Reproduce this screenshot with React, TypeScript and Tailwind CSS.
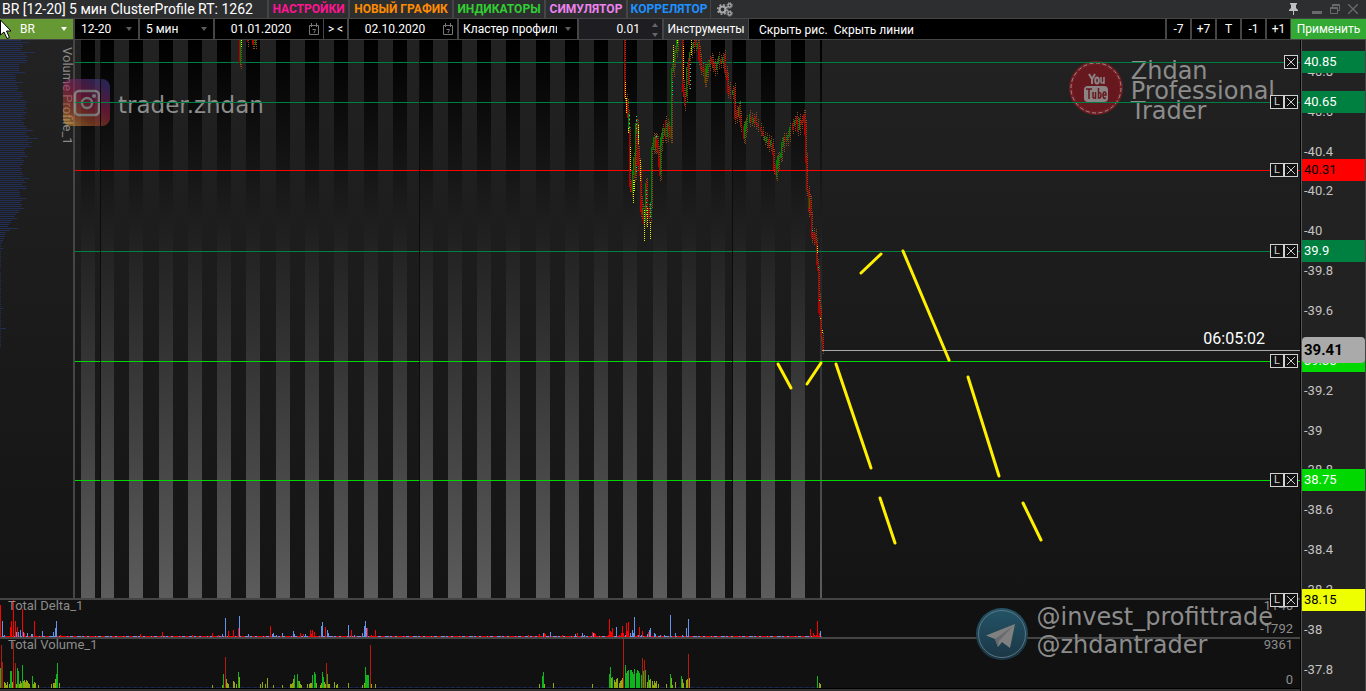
import React from 'react';

type Bar = [number, number, string];

const COLORS: Record<string, string> = {
  r: '#ff0000',
  b: '#6495ed',
  g: '#0fb41e',
  o: '#93a80e',
  d: '#b31b0b',
};

// Price axis: 199.2 px per 1.00, 40.85 is 22px under the top of the pane
const priceToY = (price: number) => Math.round(22 + (40.85 - price) * 199.2);

// "x,height,colour" separated by spaces
const parseBars = (text: string): Bar[] =>
  text.split(' ').map(item => {
    const [x, h, c] = item.split(',');
    return [Number(x), Number(h), COLORS[c]];
  });

const DELTA_BARS = parseBars(
  '0,32,r 2,16,b 4,2,b 10,10,r 11,16,r 13,37,r 15,16,r 16,5,b 17,10,r 18,5,b 20,7,b 22,28,r 23,5,b 24,4,r 27,4,b 31,3,b 32,3,b 34,16,r 42,6,b 53,5,b 55,9,b 56,16,b 60,2,r 140,3,r 162,5,r 192,2,r 212,4,r 218,2,r 222,3,b 225,19,b 228,6,r 233,7,r 238,9,r 239,21,b 248,3,b 270,11,r 272,3,b 273,4,b 276,2,b 282,4,b 293,6,b 294,3,b 300,4,r 303,3,r 305,3,b 310,7,r 311,3,r 312,7,r 314,5,r 321,11,b 322,15,b 325,10,r 327,7,b 328,4,b 348,12,b 351,7,r 354,2,b 362,4,b 364,11,b 365,16,b 366,9,b 367,9,r 371,2,r 375,7,r 528,2,r 539,3,r 543,4,b 544,4,r 545,3,r 550,5,b 562,2,r 575,3,b 577,4,r 582,4,b 584,2,b 592,5,r 593,4,b 594,4,r 595,3,r 608,2,r 609,18,r 610,6,r 611,5,r 612,9,r 616,10,b 619,2,r 620,1,r 621,4,r 622,11,r 623,4,r 625,2,b 626,14,r 627,6,r 628,15,r 630,4,b 632,7,b 633,4,b 634,20,b 637,2,r 638,2,b 639,10,r 641,2,b 642,6,r 647,3,b 648,5,r 649,7,b 650,9,b 654,4,b 655,3,b 660,2,b 664,2,b 670,22,b 675,4,b 682,2,b 686,9,b 688,18,b 810,8,r 813,4,r 814,2,r 815,1,r 816,2,r 817,16,r 819,4,r 820,6,b'
);

const VOLUME_BARS = parseBars(
  '0,20,g 1,43,d 2,26,d 4,6,o 5,5,o 6,3,o 7,6,o 9,4,o 10,17,g 11,17,g 12,6,o 13,46,d 15,25,d 16,4,o 17,20,g 18,17,g 19,4,o 20,7,o 21,5,o 22,23,g 23,7,o 24,8,o 25,6,o 26,8,o 27,7,o 28,5,o 29,4,o 32,12,g 33,4,o 34,6,o 35,5,o 38,3,o 51,4,o 53,5,o 54,5,o 55,9,o 56,14,g 57,25,g 59,5,o 212,3,o 222,3,o 223,14,g 225,31,d 226,9,o 227,5,o 228,4,o 233,7,o 234,6,o 236,4,o 238,16,g 239,11,o 260,4,o 262,6,o 265,4,o 267,10,o 273,3,o 282,3,o 290,4,o 291,4,o 292,5,o 293,9,o 294,13,g 297,14,g 298,7,g 299,7,o 300,4,o 301,3,o 307,4,o 309,4,o 310,5,o 311,5,o 312,13,g 314,16,g 315,14,g 316,5,o 320,3,o 321,5,o 322,16,g 323,11,g 324,6,o 325,4,o 326,25,d 327,14,g 328,4,o 329,4,o 334,6,o 336,3,o 337,4,o 348,5,o 362,3,o 364,5,o 365,21,g 366,13,g 367,13,g 368,13,g 370,43,d 371,4,o 375,4,o 539,4,o 542,12,g 543,16,g 544,4,o 553,5,o 592,4,o 609,14,g 610,21,g 611,10,o 612,11,g 614,8,o 615,6,o 616,9,o 617,10,o 619,5,o 620,7,o 621,8,o 622,10,o 623,49,d 625,23,g 626,15,g 627,17,g 628,18,g 630,18,g 631,18,g 632,16,g 633,14,g 634,19,g 636,15,g 637,18,g 638,17,g 639,15,g 641,13,g 642,30,d 643,17,g 644,28,d 645,18,g 647,6,o 648,13,g 649,8,o 650,9,o 652,7,o 653,3,o 654,7,o 655,5,o 656,7,o 658,4,o 666,4,o 670,14,g 671,10,o 672,3,o 675,6,o 681,12,g 682,9,o 683,5,o 686,8,o 687,9,o 688,34,d 689,10,o 817,12,g 819,5,o 820,4,o'
);

// Horizontal volume profile, one row every 2px
const PROFILE = [
  21, 29, 23, 23, 22, 21, 35, 25, 28, 26, 28, 26, 19, 19, 19, 19, 25, 15, 16, 16, 16, 23, 16, 18, 19, 17, 23, 22, 23, 20,
  25, 27, 26, 25, 27, 24, 27, 25, 23, 25, 22, 24, 24, 26, 27, 33, 27, 26, 29, 38, 28, 32, 29, 31, 26, 24, 25, 25, 28, 22, 24,
  23, 23, 20, 22, 21, 22, 23, 23, 29, 24, 26, 22, 26, 27, 19, 20, 20, 20, 26, 22, 20, 22, 21, 24, 19, 19, 16, 14, 17, 12, 11,
  9, 8, 18, 10, 6, 5, 5, 4, 3, 2, 1, 1, 3, 1, 1, 1, 1, 1, 1, 1, 1, 1, 1, 0, 1, 1, 1, 1, 1, 1, 1, 1, 1, 1, 1, 1, 1, 1, 1, 1,
  1, 1, 3, 1, 1, 1, 1, 1, 1, 1, 1, 1, 6, 1, 1, 1, 1, 1, 1, 1, 1, 1,
];

// Session stripes: [x, width]
const STRIPES = [
  [81, 14], [101, 13], [129, 14], [159, 14], [188, 14], [217, 14], [246, 14], [276, 14], [305, 14], [334, 14],
  [364, 14], [393, 14], [420, 13], [448, 14], [477, 14], [506, 14], [536, 14], [565, 14], [594, 14], [623, 14],
  [653, 14], [682, 14], [711, 14], [733, 13], [761, 14], [791, 14],
];

// "x,top,bottom,colour" for every cluster candle
const CANDLES =
  '239,0,23,r 240,0,24,g 247,0,2,r 252,0,5,r 253,0,5,r 255,0,5,g 624,0,58,r 626,58,72,r 627,63,78,r 628,74,92,g 629,91,147,r 631,140,152,r 632,130,153,g 633,117,134,g 634,117,137,r 635,83,136,g 636,83,94,g 637,84,126,r 638,110,125,r 639,122,136,r 640,130,172,r 641,160,175,r 642,168,175,g 643,170,184,r 645,143,182,g 646,142,178,r 648,168,178,r 650,162,178,g 651,107,163,g 653,97,110,g 654,98,108,r 655,97,110,g 656,98,108,r 657,100,112,r 658,110,127,r 659,118,136,r 660,97,135,g 661,94,106,g 662,88,98,g 664,88,96,g 665,80,99,r 667,83,97,g 668,86,92,r 670,86,99,r 671,28,99,g 673,20,32,g 674,10,22,g 676,0,13,g 677,0,6,g 682,0,52,r 683,44,56,r 684,52,66,r 686,27,57,g 688,18,45,r 689,12,20,g 691,7,13,g 693,2,8,g 695,0,7,r 697,3,9,g 698,4,20,r 699,10,22,r 700,18,30,r 702,27,32,r 704,28,43,r 705,28,43,g 706,26,36,g 707,24,32,g 709,20,27,g 711,17,24,r 712,19,27,r 714,23,31,r 716,23,30,g 718,16,24,g 720,19,24,r 722,17,23,g 724,14,33,r 726,30,40,r 727,37,53,r 729,46,55,r 732,50,55,g 734,47,79,r 736,70,79,r 738,67,77,g 739,65,77,r 740,75,87,r 743,86,99,r 744,85,99,g 745,82,92,g 746,79,88,g 749,74,83,g 751,77,82,r 753,78,83,g 755,76,84,r 757,83,87,r 760,87,91,r 762,91,96,r 764,96,101,g 766,97,103,g 768,99,108,r 770,100,107,g 772,103,115,r 773,113,130,r 775,124,135,r 776,120,137,g 777,117,128,g 778,116,125,g 780,113,118,g 781,102,117,g 783,97,107,g 785,97,101,r 787,95,101,g 789,87,97,g 792,83,90,r 794,80,86,g 796,76,84,r 797,81,92,r 799,78,90,g 801,80,85,r 803,74,83,r 804,74,95,r 805,84,123,r 806,117,151,r 808,150,172,r 809,158,168,g 810,160,176,r 811,176,198,r 813,192,200,r 815,193,204,r 816,202,225,r 817,223,231,r 818,230,273,r 819,258,275,r 820,270,297,r 822,297,310,r'
    .split(' ')
    .map(item => item.split(','));

// Dotted footprints: [x, top, bottom]
const YELLOW_DOTS = [
  [241, 0, 7], [625, 42, 60], [626, 58, 74], [628, 88, 93], [630, 107, 130], [633, 140, 163], [634, 140, 152],
  [638, 85, 104], [640, 120, 142], [644, 170, 202], [647, 168, 187], [650, 182, 200], [673, 5, 22], [677, 0, 4],
  [683, 6, 40], [691, 0, 15], [817, 206, 214], [820, 278, 280], [822, 290, 294],
];
const CYAN_DOTS = [
  [629, 75, 90], [636, 76, 92], [638, 92, 98], [636, 127, 134], [646, 150, 176], [650, 164, 178], [656, 96, 98],
  [672, 42, 58], [690, 24, 52], [818, 227, 229], [812, 190, 194], [819, 260, 264],
];

// Forecast strokes
const STROKES = [
  [778, 324, 791, 348], [807, 344, 821, 323], [836, 324, 871, 428], [880, 458, 895, 503],
  [861, 233, 881, 214], [903, 211, 949, 320], [968, 337, 999, 436], [1023, 463, 1041, 500],
];

const LEVELS = [
  { price: 40.85, line: 'bg-[#008040]', tag: 'bg-[#008040] text-white', lock: false },
  { price: 40.65, line: 'bg-[#008040]', tag: 'bg-[#008040] text-white', lock: true },
  { price: 40.31, line: 'bg-[#ff0000]', tag: 'bg-[#ff0000] text-black', lock: true },
  { price: 39.9, line: 'bg-[#008040]', tag: 'bg-[#008040] text-white', lock: true },
  { price: 39.35, line: 'bg-[#00d800]', tag: 'bg-[#00d800] text-white', lock: true },
  { price: 38.75, line: 'bg-[#00d800]', tag: 'bg-[#00d800] text-white', lock: true },
  { price: 38.15, line: 'bg-transparent', tag: 'bg-[#eeff00] text-black', lock: true },
];

const TICKS = [40.8, 40.6, 40.4, 40.2, 40, 39.8, 39.6, 39.2, 39, 38.8, 38.6, 38.4, 38.2, 38, 37.8];

const MENU = [
  { label: 'НАСТРОЙКИ', style: 'w-[81px] text-[#ff1493]' },
  { label: 'НОВЫЙ ГРАФИК', style: 'w-[104px] text-[#ff8c00]' },
  { label: 'ИНДИКАТОРЫ', style: 'w-[92px] text-[#32cd32]' },
  { label: 'СИМУЛЯТОР', style: 'w-[82px] text-[#ee82ee]' },
  { label: 'КОРРЕЛЯТОР', style: 'w-[84px] text-[#1e90ff]' },
];

const Gears = () => (
  <svg width="16" height="15" viewBox="0 0 16 15" fill="none" stroke="#a8a8a8">
    <circle cx="5.5" cy="7.5" r="3" strokeWidth="2.2" />
    <circle cx="5.5" cy="7.5" r="4.8" strokeWidth="1.6" strokeDasharray="1.9 1.87" />
    <circle cx="12.6" cy="3.4" r="1.6" strokeWidth="1.4" />
    <circle cx="12.6" cy="3.4" r="2.7" strokeWidth="1" strokeDasharray="1.2 0.92" />
    <circle cx="12.6" cy="11.4" r="1.6" strokeWidth="1.4" />
    <circle cx="12.6" cy="11.4" r="2.7" strokeWidth="1" strokeDasharray="1.2 0.92" />
  </svg>
);

const Arrow = ({ className }: { className: string }) => (
  <svg className={`pointer-events-none absolute top-2 right-1.5 ${className}`} width="6" height="4" viewBox="0 0 6 4">
    <path d="M0 0h6L3 4z" fill="currentColor" />
  </svg>
);

interface PickerProps {
  label: string;
  value: string;
  box: string;
  pad: string;
  arrow?: string;
}

const Picker: React.FC<PickerProps> = ({ label, value, box, pad, arrow = 'text-[#5c5c5c]' }) => (
  <label className={`relative h-5 shrink-0 ${box}`}>
    <select
      aria-label={label}
      className={`h-5 w-full appearance-none overflow-hidden bg-transparent leading-5 outline-none ${pad}`}
    >
      <option>{value}</option>
    </select>
    <Arrow className={arrow} />
  </label>
);

const DateBox = ({ label, value }: { label: string; value: string }) => (
  <label className="relative flex h-5 w-[108px] shrink-0 items-center bg-black">
    <input aria-label={label} defaultValue={value} className="h-5 w-[92px] bg-transparent text-center outline-none" />
    <svg className="absolute top-1 right-1" width="10" height="12" viewBox="0 0 10 12" fill="none" stroke="#777">
      <path d="M.5 2.5h9v9h-9zM2.5 0v4M7.5 0v4M3.5 6.5h3L5 10" />
    </svg>
  </label>
);

// Top row: title, menu and window buttons
const TitleBar = () => (
  <header className="flex h-[18px] items-center bg-[#2d2e30] text-white">
    <h1 className="w-[267px] shrink-0 whitespace-nowrap pl-0.5 text-sm leading-[18px]">
      BR [12-20] 5 мин ClusterProfile RT: 1262
    </h1>
    {MENU.map(item => (
      <button
        key={item.label}
        className={`h-[18px] shrink-0 whitespace-nowrap border-l-2 border-[#454545] text-center text-xs font-bold leading-[18px] ${item.style}`}
      >
        {item.label}
      </button>
    ))}
    <button aria-label="Параметры" className="flex h-[18px] items-center border-l border-[#454545] pl-1.5">
      <Gears />
    </button>
    <div className="ml-auto flex items-center gap-2 pr-2">
      <button aria-label="Закрепить" className="mr-1.5">
        <svg width="9" height="12" viewBox="0 0 9 12" fill="#c0c0c0">
          <path d="M1 0h7v1.5H7V5l2 2v1H5v4H4V8H0V7l2-2V1.5H1z" />
        </svg>
      </button>
      <button aria-label="Свернуть">
        <svg width="10" height="12" viewBox="0 0 10 12" fill="#6a6a6a">
          <path d="M0 8h10v3H0z" />
        </svg>
      </button>
      <button aria-label="Развернуть">
        <svg width="10" height="10" viewBox="0 0 10 10" fill="none" stroke="#6a6a6a">
          <path d="M.5 3.5h7v6h-7zM0 4.5h8M2.5 3V.5h7v6H8M3 1.5h6" />
        </svg>
      </button>
      <button aria-label="Закрыть">
        <svg width="10" height="10" viewBox="0 0 10 10" fill="none" stroke="#6a6a6a" strokeWidth="1.3">
          <path d="M0 0l10 10M10 0L0 10" />
        </svg>
      </button>
    </div>
  </header>
);

const Toolbar = () => (
  <nav className="flex h-[22px] items-center gap-0.5 border-y border-[#454545] bg-[#454545] text-xs text-white">
    <Picker label="Инструмент" value="BR" box="w-[73px] bg-[#669933]" pad="pr-4 pl-5" arrow="text-white" />
    <Picker label="Контракт" value="12-20" box="w-[63px] bg-black" pad="pr-4 pl-1.5" />
    <Picker label="Период" value="5 мин" box="w-[73px] bg-black" pad="pr-4 pl-1.5" />
    <DateBox label="Дата начала" value="01.01.2020" />
    <div className="-ml-px flex h-5 w-[23px] shrink-0 items-center justify-between bg-black px-1">
      <button>&gt;</button>
      <button>&lt;</button>
    </div>
    <DateBox label="Дата конца" value="02.10.2020" />
    <Picker label="Тип графика" value="Кластер профиль" box="w-[118px] bg-black" pad="pr-5 pl-1" />
    <label className="relative h-5 w-[83px] shrink-0 bg-[#1d1d22]">
      <input aria-label="Шаг" defaultValue="0.01" className="h-5 w-full bg-transparent pr-[22px] text-right outline-none" />
      <svg className="absolute top-1 right-1" width="6" height="14" viewBox="0 0 6 14" fill="#666">
        <path d="M0 4l3-4 3 4zM0 10h6l-3 4z" />
      </svg>
    </label>
    <button className="h-5 w-[84px] shrink-0 whitespace-nowrap bg-[#2d2e30]">Инструменты</button>
    <div className="-ml-px flex h-5 flex-1 items-center gap-1.5 bg-black pt-px pl-2.5 whitespace-nowrap">
      <button>Скрыть рис.</button>
      <button>Скрыть линии</button>
    </div>
    {['-7', '+7', 'T', '-1', '+1'].map(step => (
      <button key={step} className="h-5 w-[23px] shrink-0 bg-black">
        {step}
      </button>
    ))}
    <button className="-ml-px h-5 w-[75px] shrink-0 bg-[#33aa33]">Применить</button>
  </nav>
);

const PriceChart = () => (
  <svg className="absolute inset-0 h-full w-full" shapeRendering="crispEdges">
    <defs>
      <linearGradient id="stripe" x1="0" y1="0" x2="0" y2="1">
        <stop offset="0" stopColor="#000000" />
        <stop offset="1" stopColor="#5c5c5c" />
      </linearGradient>
    </defs>
    {PROFILE.map((w, i) => (
      <rect key={i} x="0" y={i * 2} width={w} height="1" fill="#232e55" />
    ))}
    {STRIPES.map(([x, w]) => (
      <rect key={x} x={x} y="0" width={w} height="100%" fill="url(#stripe)" />
    ))}
    <rect x="73" y="0" width="2" height="100%" fill="#454545" />
    <rect x="820" y="0" width="2" height="100%" fill="url(#stripe)" />
  </svg>
);

const Candles = () => (
  <svg className="absolute inset-0 h-full w-full" shapeRendering="crispEdges">
    {[100, 419, 732].map(x => (
      <rect key={x} x={x} y="0" width="1" height="100%" fill="#0c0c0c" />
    ))}
    {CANDLES.map(([x, top, bottom]) => (
      <line
        key={x}
        x1={Number(x) + 1.5}
        x2={Number(x) + 1.5}
        y1={Math.max(0, Number(top) - 4)}
        y2={Number(bottom) + 5}
        stroke="#8a4a1e"
        strokeDasharray="1 1"
      />
    ))}
    {CANDLES.map(([x, top, bottom, color]) => (
      <rect
        key={x}
        x={x}
        y={top}
        width="1"
        height={Number(bottom) - Number(top)}
        fill={color === 'r' ? '#b40000' : '#008000'}
      />
    ))}
    {YELLOW_DOTS.map(([x, y1, y2]) => (
      <line key={`${x}-${y1}`} x1={x + 0.5} x2={x + 0.5} y1={y1} y2={y2} stroke="#e6f000" strokeDasharray="1 1" />
    ))}
    {CYAN_DOTS.map(([x, y1, y2]) => (
      <line key={`${x}-${y1}`} x1={x + 0.5} x2={x + 0.5} y1={y1} y2={y2} stroke="#00e6aa" strokeDasharray="1 3" />
    ))}
    <rect x="822" y="310" width="100%" height="1" fill="#aaaaaa" />
    {STROKES.map(([x1, y1, x2, y2]) => (
      <line key={x1} x1={x1} y1={y1} x2={x2} y2={y2} stroke="#fff000" strokeWidth="3" strokeLinecap="round" shapeRendering="auto" />
    ))}
  </svg>
);

// Bars grow up from the bottom edge of their pane
const Histogram = ({ bars, height, base }: { bars: Bar[]; height: number; base: React.ReactNode }) => (
  <svg className="absolute inset-0 h-full w-full" shapeRendering="crispEdges">
    {base}
    {bars.map(([x, h, fill]) => (
      <rect key={x} x={x} y={height - h} width="1" height={h} fill={fill} />
    ))}
  </svg>
);

const LevelLine = ({ price, line, lock }: { price: number; line: string; lock: boolean }) => (
  <div className="absolute right-0 left-[75px] flex h-3.5 -translate-y-1/2" style={{ top: priceToY(price) }}>
    <div className={`mt-[7px] h-px flex-1 ${line}`} />
    {lock && (
      <button className="h-3.5 w-3.5 border border-[#d0d0d0] bg-[#111] text-center text-[11px] leading-3 text-[#d0d0d0]">
        L
      </button>
    )}
    <button aria-label="Удалить" className="h-3.5 w-3.5 border border-[#d0d0d0] bg-[#111]">
      <svg width="12" height="12" viewBox="0 0 12 12" stroke="#d0d0d0">
        <path d="M2 2l8 8M10 2l-8 8" />
      </svg>
    </button>
    <div className={`mt-[7px] h-px w-0.5 ${line}`} />
  </div>
);

const PriceAxis = () => (
  <aside className="relative w-[66px] shrink-0 overflow-hidden border-r border-l border-r-[#454545] border-l-black bg-[#222] text-[13px] leading-[22px]">
    <div className="absolute inset-y-0 left-0 w-px bg-[#555]" />
    {TICKS.map(tick => (
      <div key={tick} className="absolute left-[3px] -translate-y-1/2 text-[#c4c4c4]" style={{ top: priceToY(tick) }}>
        -{tick}
      </div>
    ))}
    {LEVELS.map(level => (
      <div
        key={level.price}
        className={`absolute right-0 left-px h-[22px] -translate-y-1/2 pl-0.5 ${level.tag}`}
        style={{ top: priceToY(level.price) }}
      >
        {level.price}
      </div>
    ))}
    <div
      className="absolute right-0 left-px h-[26px] -translate-y-1/2 rounded-sm bg-[#aaa] pl-0.5 text-[15px] leading-[26px] font-bold text-black"
      style={{ top: priceToY(39.41) + 1 }}
    >
      39.41
    </div>
  </aside>
);

// Channel marks laid over the chart
const Watermarks = () => (
  <div className="pointer-events-none font-['DejaVu_Sans',sans-serif] text-[#8c8c8c]">
    <div className="absolute top-[39px] left-[63px] flex items-center gap-2 text-[23px]">
      <svg width="47" height="47" viewBox="0 0 47 47" opacity="0.55">
        <defs>
          <linearGradient id="insta" x1="0.1" y1="1" x2="0.7" y2="0">
            <stop offset="0" stopColor="#d8a038" />
            <stop offset="0.3" stopColor="#b04a2c" />
            <stop offset="0.6" stopColor="#a01f50" />
            <stop offset="1" stopColor="#4a3a90" />
          </linearGradient>
        </defs>
        <rect width="47" height="47" rx="8" fill="url(#insta)" />
        <g fill="none" stroke="#c8c8c8" strokeWidth="2.5">
          <rect x="12" y="12" width="24" height="24" rx="4" />
          <circle cx="24" cy="24" r="5" />
        </g>
        <circle cx="31" cy="17" r="2" fill="#c8c8c8" />
      </svg>
      <span className="pt-1.5">trader.zhdan</span>
    </div>
    <div className="absolute top-[21px] right-[25px] flex items-start gap-2 text-2xl leading-5">
      <svg width="54" height="54" viewBox="0 0 54 54">
        <circle cx="27" cy="27" r="27" fill="#701c22" />
        <circle cx="27" cy="27" r="23" fill="#66181e" />
        <circle cx="27" cy="27" r="25" fill="none" stroke="#a08c8c" strokeDasharray="4 2.5" />
        <g fill="none" stroke="#8c8484" strokeWidth="2">
          <path d="M20 13l3 5 3-5M23 18v5" />
          <ellipse cx="28" cy="19.5" rx="1.8" ry="3" />
          <path d="M32 16v5q0 2 3 0v-5M35 16v7" strokeWidth="1.6" />
        </g>
        <rect x="15" y="25" width="24" height="16" rx="4" fill="#8c8484" />
        <g fill="none" stroke="#66181e" strokeWidth="1.5">
          <path d="M17 28h6M20 28v10M24 31v5q0 2 2.500 0v-5M26.500 31v7M29.500 27v10h1q1.500 0 1.500-3t-2.500-2M34 34h3q0-3-1.500-3T34 34t1.500 3.500l1.500-1" />
        </g>
      </svg>
      <span>
        Zhdan
        <br />
        Professional
        <br />
        Trader
      </span>
    </div>
    <div className="absolute right-[27px] bottom-[26px] flex items-center gap-2 text-2xl leading-7">
      <svg width="52" height="52" viewBox="0 0 52 52">
        <defs>
          <linearGradient id="plane" x1="0" y1="0" x2="0" y2="1">
            <stop offset="0" stopColor="#245468" />
            <stop offset="1" stopColor="#1a3644" />
          </linearGradient>
        </defs>
        <circle cx="26" cy="26" r="26" fill="url(#plane)" />
        <circle cx="26" cy="26" r="23.500" fill="none" stroke="#5c7480" />
        <path d="M10 27.500L39 16l-5 24-8-6-4 5-3-8z" fill="#808080" />
        <path d="M19 31l18-13-14 15-1 6z" fill="#666a6c" />
      </svg>
      <span className="pb-1.5">
        @invest_profittrade
        <br />
        @zhdantrader
      </span>
    </div>
  </div>
);

const App: React.FC = () => {
  return (
    <div className="flex h-screen min-h-[400px] flex-col overflow-hidden bg-[#141414] font-[Roboto,'Noto_Sans',sans-serif]">
      <TitleBar />
      <Toolbar />
      <div className="flex min-h-0 flex-1">
        <main className="relative flex min-w-0 flex-1 flex-col">
          {/* Price pane */}
          <section className="relative min-h-0 flex-1 bg-linear-to-b from-[#222] to-[#141414]">
            <PriceChart />
            <h2 className="absolute top-[7px] left-[59px] text-[13px] leading-4 text-[#8a8a8a] [writing-mode:vertical-rl]">
              Volume Profile_1
            </h2>
          </section>

          {/* Delta pane */}
          <section className="relative h-[39px] border-t-2 border-[#454545] bg-[#111] text-[#8c8c8c]">
            <Histogram
              bars={DELTA_BARS}
              height={37}
              base={
                <>
                  <rect x="0" y="36" width="822" height="1" fill="#6495ed" />
                  <line x1="0" x2="822" y1="36.5" y2="36.5" stroke="#ff0000" strokeDasharray="3 2 6 1 2 3 4 4 1 2" />
                </>
              }
            />
            <h2 className="absolute -top-0.5 left-2 text-[13px] leading-4">Total Delta_1</h2>
            <span className="absolute -top-0.5 right-[7px] text-[13px] leading-4">1146</span>
            <span className="absolute right-[7px] bottom-0 text-[13px] leading-4">-1792</span>
          </section>

          {/* Volume pane */}
          <section className="relative h-[51px] border-t-2 border-[#454545] bg-[#111] text-[#8c8c8c]">
            <Histogram
              bars={VOLUME_BARS}
              height={49}
              base={<line x1="0" x2="822" y1="48.5" y2="48.5" stroke="#1c2750" strokeDasharray="5 1" />}
            />
            <h2 className="absolute -top-0.5 left-2 text-[13px] leading-4">Total Volume_1</h2>
            <span className="absolute -top-0.5 right-[7px] text-[13px] leading-4">9361</span>
            <span className="absolute right-[7px] bottom-0 text-[13px] leading-4">0</span>
          </section>
          <div className="h-[3px] border-t border-black bg-[#333]" />

          {/* Levels, candles and marks drawn over the panes */}
          <div className="absolute inset-0">
            <Watermarks />
            {LEVELS.map(level => (
              <LevelLine key={level.price} price={level.price} line={level.line} lock={level.lock} />
            ))}
            <div className="pointer-events-none absolute inset-x-0 top-0 bottom-[93px]">
              <Candles />
            </div>
            <time className="absolute top-[291px] right-[35px] text-base leading-4 text-white">06:05:02</time>
          </div>
        </main>
        <PriceAxis />
      </div>

      {/* Mouse pointer */}
      <svg className="pointer-events-none absolute top-5 left-0" width="12" height="19" viewBox="0 0 12 19">
        <path d="M.5 0v15l3.500-3 3 6.500 2.500-1-3-6.500H11z" fill="#fff" stroke="#000" />
      </svg>
    </div>
  );
};

export default App;
